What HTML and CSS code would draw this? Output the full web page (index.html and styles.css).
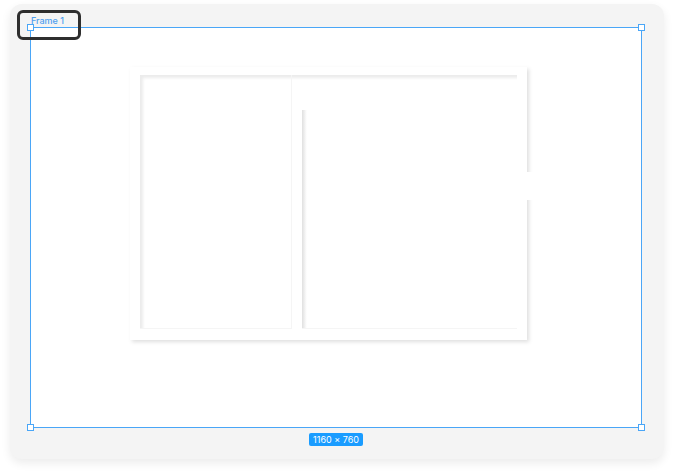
FILE: index.html
```html
<!DOCTYPE html>
<html>
<head>
<meta charset="utf-8">
<link rel="stylesheet" href="styles.css">
</head>
<body>
<div class="stage">
  <div class="card">
    <div class="frame">
      <span class="frame-label">Frame 1</span>
      <span class="highlight"></span>
      <span class="handle tl"></span>
      <span class="handle tr"></span>
      <span class="handle bl"></span>
      <span class="handle br"></span>
      <div class="panel">
        <div class="content">
          <div class="sidebar"></div>
          <div class="main"></div>
        </div>
        <span class="notch"></span>
      </div>
    </div>
    <div class="size-row"><span class="badge">1160 × 760</span></div>
  </div>
</div>
</body>
</html>
```
FILE: styles.css
```css
* { box-sizing: border-box; }
html, body { margin: 0; padding: 0; background: #ffffff; }
body { font-family: Inter, "Noto Sans", "Liberation Sans", sans-serif; }
.stage { padding: 4px 10px 0 10px; width: 674px; height: 475px; }
.card {
  width: 654px; height: 455px;
  background: #f4f4f4;
  border-radius: 12px;
  box-shadow: 0 4px 10px rgba(0,0,0,0.08);
  padding: 23px 0 0 20px;
}
.frame {
  position: relative;
  width: 612px; height: 401px;
  background: #ffffff;
  border: 1px solid #4aa6f7;
  padding: 39px 0 0 99px;
}
.frame-label {
  position: absolute; left: 0; top: -12px;
  font-size: 9px; line-height: 10px; color: #4f9fef; font-weight: 500;
}
.highlight {
  position: absolute; left: -14px; top: -18px;
  width: 64px; height: 30px;
  border: 3px solid #2e2e2e; border-radius: 6px;
}
.handle {
  position: absolute; width: 7px; height: 7px;
  background: #fff; border: 1px solid #4aa6f7;
}
.handle.tl { left: -4px; top: -4px; }
.handle.tr { right: -4px; top: -4px; }
.handle.bl { left: -4px; bottom: -4px; }
.handle.br { right: -4px; bottom: -4px; }
.panel {
  position: relative;
  width: 397px; height: 273px;
  background: #ffffff;
  box-shadow: 2px 2px 4px rgba(0,0,0,0.13);
  padding: 8px 10px 11px 10px;
}
.content {
  display: flex; height: 100%;
  box-shadow: inset 3px 3px 3px rgba(0,0,0,0.08);
}
.sidebar {
  width: 152px;
  border-right: 1px solid #f5f5f5;
  border-bottom: 1px solid #f5f5f5;
}
.main {
  flex: 1; margin: 35px 0 0 10px;
  background: linear-gradient(to right, #e0e0e0 0, #ececec 2px, #fafafa 4px, #ffffff 5px);
  border-bottom: 1px solid #f5f5f5;
}
.notch {
  position: absolute; right: -6px; top: 105px;
  width: 16px; height: 28px; background: #ffffff;
}
.size-row { display: flex; justify-content: center; width: 612px; margin-top: 5px; }
.badge {
  background: #1a9cff; color: #fff;
  font-size: 9px; line-height: 13px; padding: 0 4px;
  border-radius: 2px;
}
```
